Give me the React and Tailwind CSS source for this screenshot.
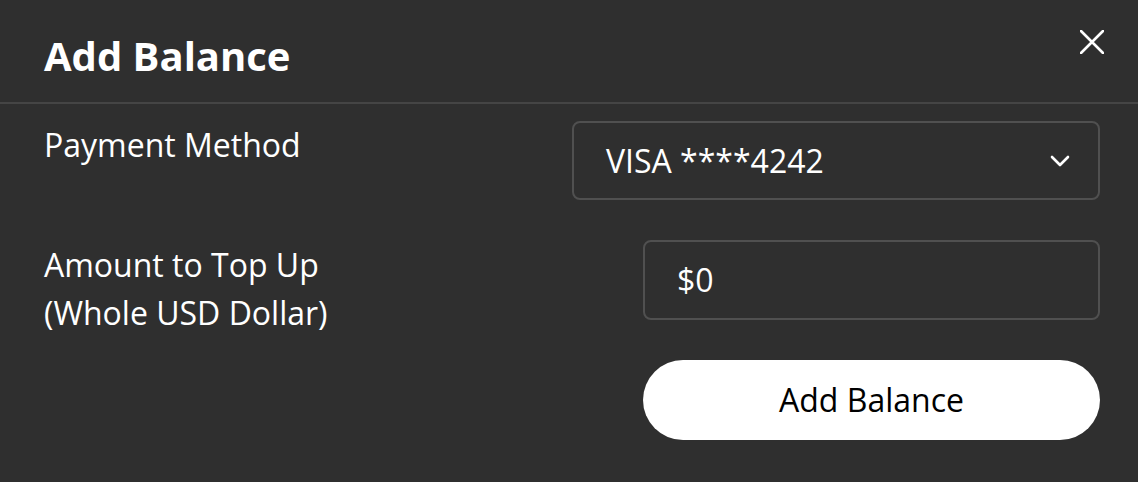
import React from 'react';

const font = { fontFamily: '"Open Sans", "Noto Sans", sans-serif' };

const CloseIcon = () => (
  <svg width="24" height="24" viewBox="0 0 24 24" className="shrink-0">
    <path d="M1 1L23 23M23 1L1 23" stroke="white" strokeWidth="2.6" strokeLinecap="round" />
  </svg>
);

const Chevron = () => (
  <svg width="20" height="12" viewBox="0 0 20 12">
    <path d="M2 2L10 10L18 2" stroke="white" strokeWidth="2.6" fill="none" strokeLinecap="round" strokeLinejoin="round" />
  </svg>
);

const App = () => {
  return (
    <div className="w-[1138px] h-[482px] bg-[#2f2f2f] text-white overflow-hidden" style={font}>
      {/* Header */}
      <div className="flex justify-between items-start pl-11 pr-[34px] pt-8 h-[104px] border-b-2 border-[#454545]">
        <h2 className="text-[40px] leading-[48px] font-bold">Add Balance</h2>
        <button className="mt-[-2px]">
          <CloseIcon />
        </button>
      </div>

      {/* Body */}
      <div className="grid grid-cols-[1fr_auto] gap-y-10 items-start pl-11 pr-[38px] pt-[17px]">
        <label className="text-[32px] leading-[48px]">Payment Method</label>
        <div className="justify-self-end w-[528px] h-[79px] rounded-lg border-2 border-[#505050] flex items-center justify-between pl-8 pr-[28px]">
          <span className="text-[32px]">VISA ****4242</span>
          <Chevron />
        </div>

        <label className="row-span-2 text-[32px] leading-[48px] mt-px">
          Amount to Top Up
          <br />
          (Whole USD Dollar)
        </label>
        <div className="justify-self-end w-[457px] h-20 rounded-lg border-2 border-[#505050] flex items-center pl-8">
          <span className="text-[32px]">$0</span>
        </div>

        <button className="justify-self-end w-[457px] h-20 rounded-full bg-white text-black text-[32px]">
          Add Balance
        </button>
      </div>
    </div>
  );
};

export default App;
